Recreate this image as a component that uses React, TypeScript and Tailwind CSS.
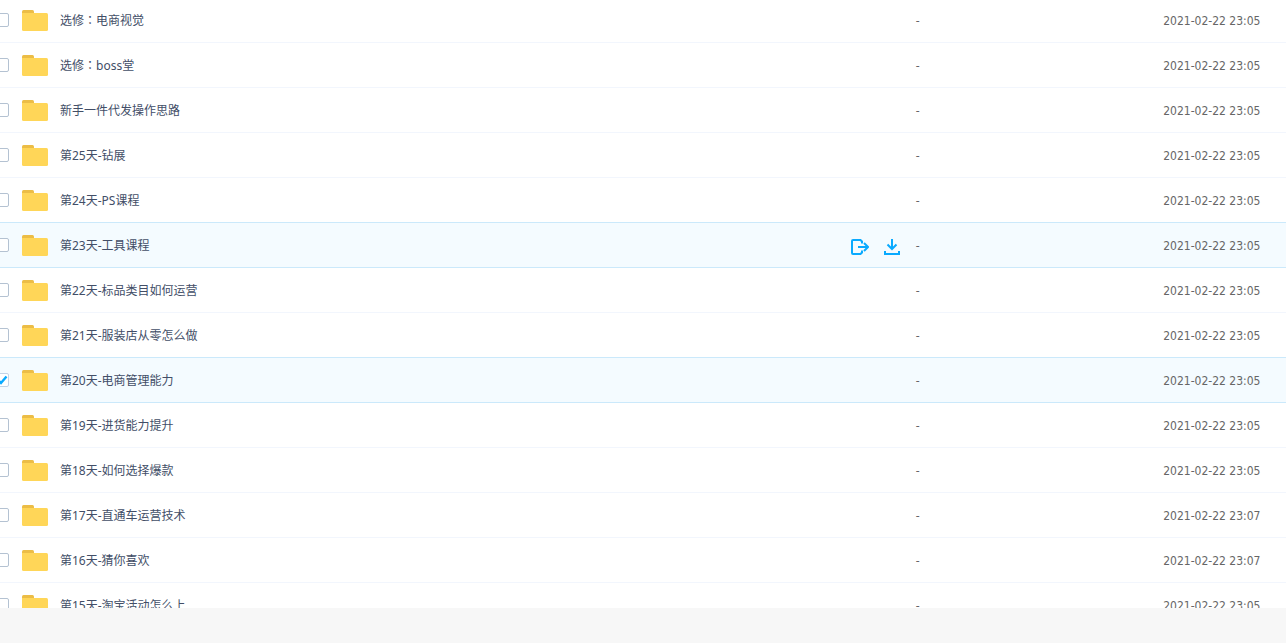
import { useState } from 'react'

type FileRow = {
  name: string
  date: string
}

const files: FileRow[] = [
  { name: '选修：电商视觉', date: '2021-02-22 23:05' },
  { name: '选修：boss堂', date: '2021-02-22 23:05' },
  { name: '新手一件代发操作思路', date: '2021-02-22 23:05' },
  { name: '第25天-钻展', date: '2021-02-22 23:05' },
  { name: '第24天-PS课程', date: '2021-02-22 23:05' },
  { name: '第23天-工具课程', date: '2021-02-22 23:05' },
  { name: '第22天-标品类目如何运营', date: '2021-02-22 23:05' },
  { name: '第21天-服装店从零怎么做', date: '2021-02-22 23:05' },
  { name: '第20天-电商管理能力', date: '2021-02-22 23:05' },
  { name: '第19天-进货能力提升', date: '2021-02-22 23:05' },
  { name: '第18天-如何选择爆款', date: '2021-02-22 23:05' },
  { name: '第17天-直通车运营技术', date: '2021-02-22 23:07' },
  { name: '第16天-猜你喜欢', date: '2021-02-22 23:07' },
  { name: '第15天-淘宝活动怎么上', date: '2021-02-22 23:05' },
]

function FolderIcon() {
  return (
    <svg width="26" height="21" viewBox="0 0 26 21" className="shrink-0" aria-hidden="true">
      <path d="M0 5V1.5Q0 0 1.5 0H10.5Q12 0 12 1.5V5Z" fill="#ecbd46" />
      <path d="M0 3H24.5Q26 3 26 4.5V19.5Q26 21 24.5 21H1.5Q0 21 0 19.5Z" fill="#ffd658" />
    </svg>
  )
}

function ShareIcon() {
  return (
    <svg width="18" height="16" viewBox="0 0 18 16" fill="none" stroke="#09aaff" strokeWidth="2" aria-hidden="true">
      <path d="M11 4.5V2.5L9.5 1H2Q1 1 1 2V14Q1 15 2 15H9.5L11 13.5V11.5" />
      <path d="M7 8H17M13 4L17 8L13 12" />
    </svg>
  )
}

function DownloadIcon() {
  return (
    <svg width="16" height="16" viewBox="0 0 16 16" fill="none" stroke="#09aaff" strokeWidth="2" aria-hidden="true">
      <path d="M8 0V10M3.5 5.5L8 10L12.5 5.5" />
      <path d="M1 12V15H15V12" />
    </svg>
  )
}

function Checkbox({ id, checked, onChange }: { id: string; checked: boolean; onChange: () => void }) {
  return (
    <span className="relative -ml-[5px] h-3.5 w-3.5 shrink-0">
      <input
        id={id}
        type="checkbox"
        checked={checked}
        onChange={onChange}
        className="block h-3.5 w-3.5 appearance-none rounded-xs border border-[#b4c2d2] bg-white checked:border-[#c3d3e6]"
      />
      {checked && (
        <svg
          width="14"
          height="14"
          viewBox="0 0 14 14"
          fill="none"
          stroke="#09aaff"
          strokeWidth="2.4"
          className="pointer-events-none absolute inset-0"
          aria-hidden="true"
        >
          <path d="M2.5 6.5L6 10L11.5 3.5" />
        </svg>
      )}
    </span>
  )
}

// the full-width colon sits in the middle of its box only in the TC font
function FileName({ name }: { name: string }) {
  const [prefix, rest] = name.split('：')
  return (
    <span className="pt-0.5">
      {prefix}
      {rest && <span className="font-['Noto_Sans_CJK_TC',sans-serif] leading-none">：</span>}
      {rest}
    </span>
  )
}

export default function App() {
  const [selected, setSelected] = useState<number[]>([8])
  const [current, setCurrent] = useState(5)

  const toggle = (i: number) => {
    setSelected(selected.includes(i) ? selected.filter((n) => n !== i) : [...selected, i])
  }

  const isActive = (i: number) => i === current || selected.includes(i)

  return (
    <div className="flex h-screen flex-col bg-white font-['Noto_Sans','Noto_Sans_CJK_SC',sans-serif] text-xs text-[#424e67]">
      <main className="min-h-0 flex-1 overflow-hidden">
        <table className="-mt-0.5 w-full table-fixed border-separate border-spacing-0">
          <colgroup>
            <col className="w-[71.2%]" />
            <col className="w-[19.25%]" />
            <col />
          </colgroup>
          <tbody>
            {files.map((file, i) => {
              // the line above an active row belongs to the row before it
              const border = isActive(i) || isActive(i + 1) ? 'border-[#cbe9fb]' : 'border-[#f2f6fd]'
              const cell = `h-[45px] border-b align-middle ${border}`
              const textCell = `${cell} px-0 pt-0.5 pb-0 font-['DejaVu_Sans_Condensed','Noto_Sans',sans-serif] whitespace-nowrap text-[#666]`
              return (
                <tr
                  key={file.name}
                  onClick={() => setCurrent(i)}
                  className={isActive(i) ? 'bg-[#f4fbff]' : 'bg-white'}
                >
                  <td className={`${cell} p-0`}>
                    <div className="flex items-center">
                      <Checkbox id={`file-${i}`} checked={selected.includes(i)} onChange={() => toggle(i)} />
                      <label htmlFor={`file-${i}`} className="ml-[13px] flex flex-1 items-center gap-3">
                        <FolderIcon />
                        <FileName name={file.name} />
                      </label>
                      {i === current && (
                        <div className="mt-1 mr-4 flex gap-[15px]">
                          <button type="button" aria-label="分享">
                            <ShareIcon />
                          </button>
                          <button type="button" aria-label="下载">
                            <DownloadIcon />
                          </button>
                        </div>
                      )}
                    </div>
                  </td>
                  <td className={textCell}>-</td>
                  <td className={textCell}>{file.date}</td>
                </tr>
              )
            })}
          </tbody>
        </table>
      </main>
      <footer className="h-[35px] shrink-0 bg-[#f7f7f7]" />
    </div>
  )
}
